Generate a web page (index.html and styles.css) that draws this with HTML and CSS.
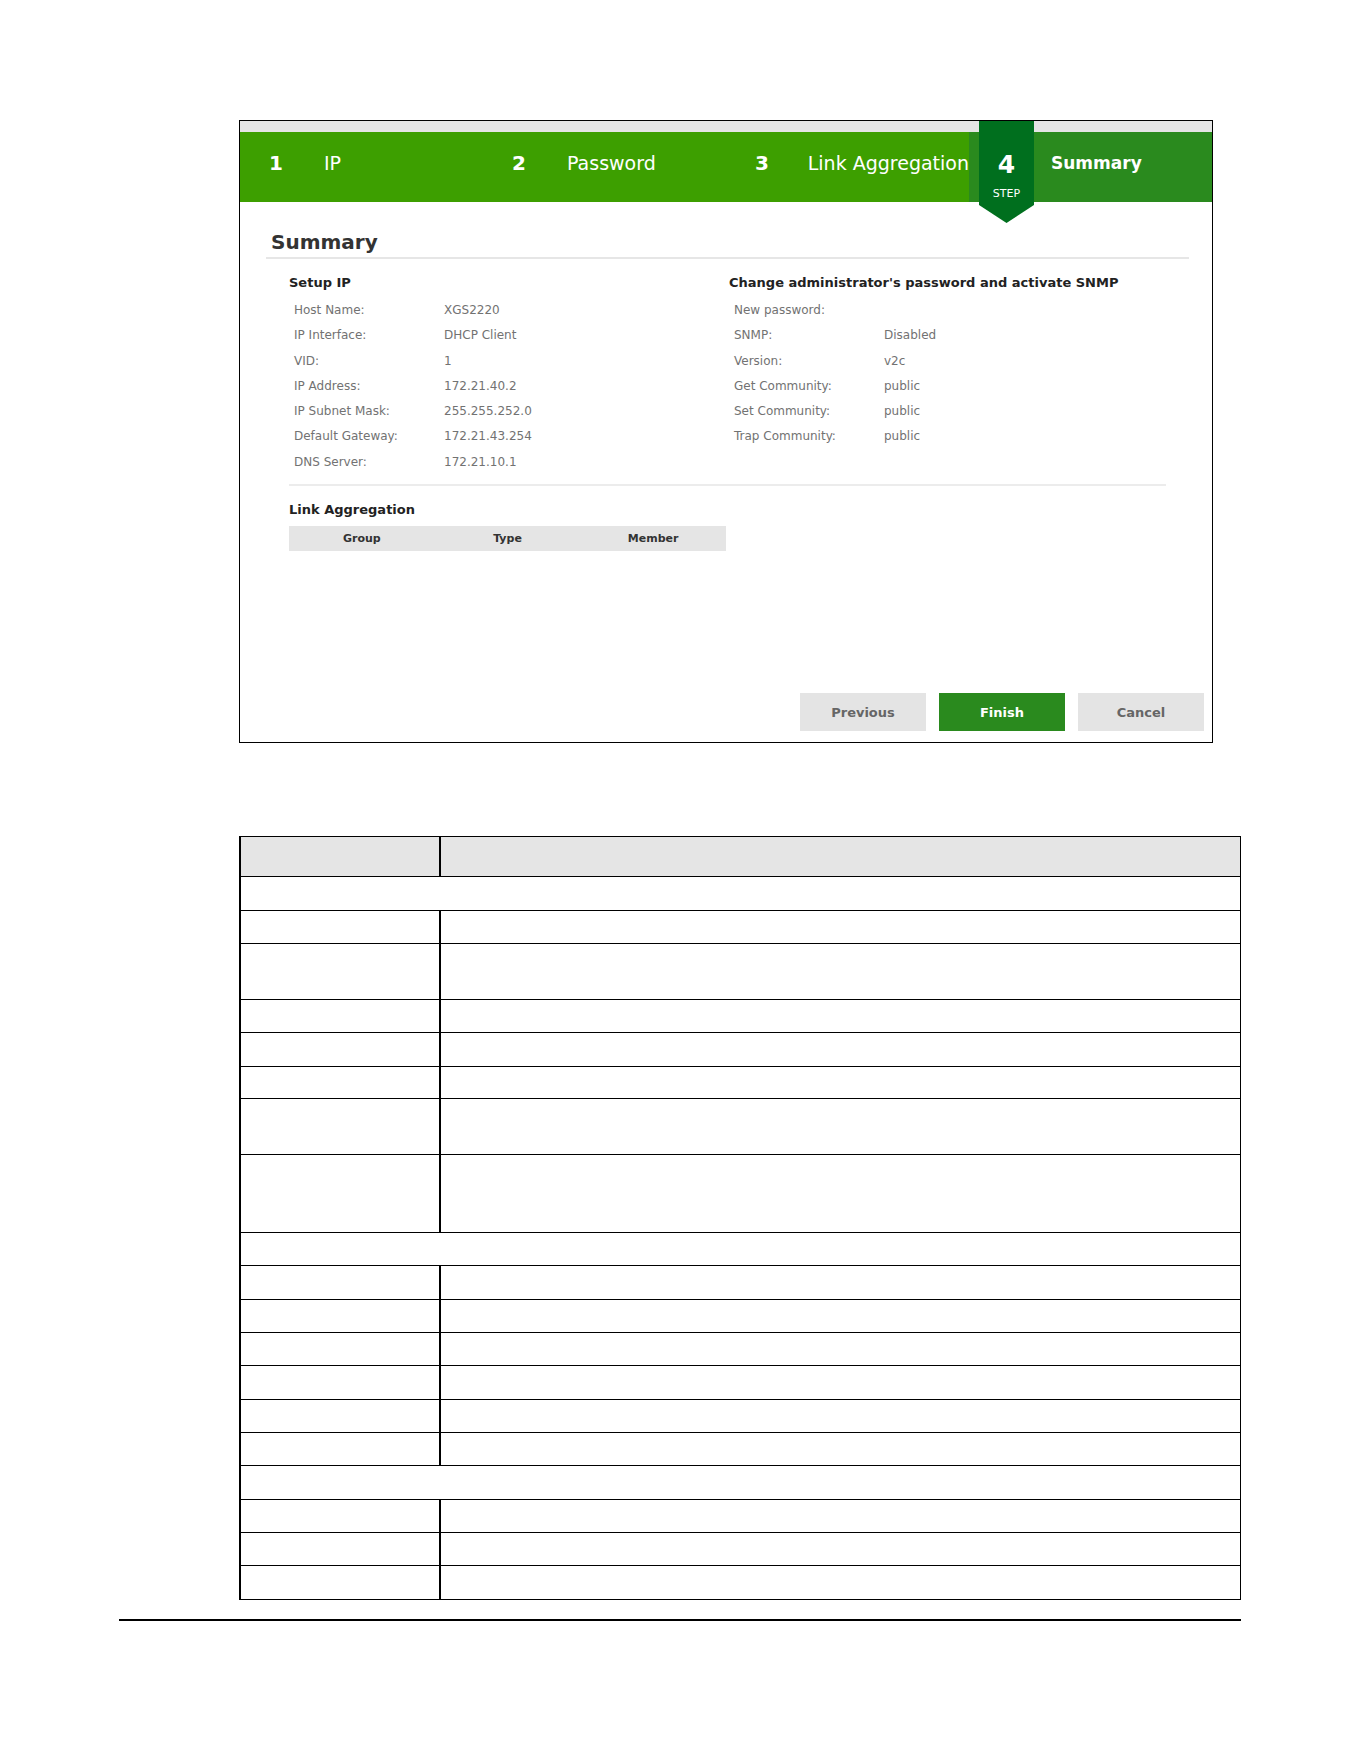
FILE: index.html
```html
<!DOCTYPE html>
<html lang="en">
<head>
    <meta charset="UTF-8">
    <meta name="viewport" content="width=device-width, initial-scale=1.0">
    <title>Summary</title>
    <link rel="stylesheet" href="styles.css">
</head>
<body>
    <div class="wizard">
        <div class="wizardTop"></div>
        <div class="steps">
            <div class="step"><span class="num">1</span><span class="label">IP</span></div>
            <div class="step"><span class="num">2</span><span class="label">Password</span></div>
            <div class="step"><span class="num">3</span><span class="label">Link Aggregation</span></div>
            <div class="step current"><span class="label">Summary</span></div>
        </div>
        <div class="badge">
            <span class="badgeNum">4</span>
            <span class="badgeText">STEP</span>
        </div>

        <div class="content">
            <div class="title">Summary</div>
            <div class="details">
                <div class="columns">
                    <div class="col">
                        <div class="sectionHead">Setup IP</div>
                        <div class="infoRow"><span class="k">Host Name:</span><span>XGS2220</span></div>
                        <div class="infoRow"><span class="k">IP Interface:</span><span>DHCP Client</span></div>
                        <div class="infoRow"><span class="k">VID:</span><span>1</span></div>
                        <div class="infoRow"><span class="k">IP Address:</span><span>172.21.40.2</span></div>
                        <div class="infoRow"><span class="k">IP Subnet Mask:</span><span>255.255.252.0</span></div>
                        <div class="infoRow"><span class="k">Default Gateway:</span><span>172.21.43.254</span></div>
                        <div class="infoRow"><span class="k">DNS Server:</span><span>172.21.10.1</span></div>
                    </div>
                    <div class="col">
                        <div class="sectionHead">Change administrator's password and activate SNMP</div>
                        <div class="infoRow"><span class="k">New password:</span><span></span></div>
                        <div class="infoRow"><span class="k">SNMP:</span><span>Disabled</span></div>
                        <div class="infoRow"><span class="k">Version:</span><span>v2c</span></div>
                        <div class="infoRow"><span class="k">Get Community:</span><span>public</span></div>
                        <div class="infoRow"><span class="k">Set Community:</span><span>public</span></div>
                        <div class="infoRow"><span class="k">Trap Community:</span><span>public</span></div>
                    </div>
                </div>
                <div class="divider"></div>
                <div class="sectionHead linkHead">Link Aggregation</div>
                <div class="lagHeader">
                    <span>Group</span>
                    <span>Type</span>
                    <span>Member</span>
                </div>
            </div>
            <div class="actions">
                <button class="btn">Previous</button>
                <button class="btn finish">Finish</button>
                <button class="btn">Cancel</button>
            </div>
        </div>
    </div>

    <table class="descTable">
        <tr class="head r40"><td class="first"></td><td></td></tr>
        <tr class="r34"><td colspan="2"></td></tr>
        <tr class="r33"><td class="first"></td><td></td></tr>
        <tr class="r56"><td class="first"></td><td></td></tr>
        <tr class="r33"><td class="first"></td><td></td></tr>
        <tr class="r34"><td class="first"></td><td></td></tr>
        <tr class="r32"><td class="first"></td><td></td></tr>
        <tr class="r56"><td class="first"></td><td></td></tr>
        <tr class="r78"><td class="first"></td><td></td></tr>
        <tr class="r33"><td colspan="2"></td></tr>
        <tr class="r34"><td class="first"></td><td></td></tr>
        <tr class="r33"><td class="first"></td><td></td></tr>
        <tr class="r33"><td class="first"></td><td></td></tr>
        <tr class="r34"><td class="first"></td><td></td></tr>
        <tr class="r33"><td class="first"></td><td></td></tr>
        <tr class="r33"><td class="first"></td><td></td></tr>
        <tr class="r34"><td colspan="2"></td></tr>
        <tr class="r33"><td class="first"></td><td></td></tr>
        <tr class="r33"><td class="first"></td><td></td></tr>
        <tr class="r34"><td class="first"></td><td></td></tr>
    </table>

    <div class="pageFooter"></div>
</body>
</html>
```

FILE: styles.css
```css
body
{
    margin: 0;
    background-color: #fff;
    font-family: "DejaVu Sans", "Noto Sans", sans-serif;
}
.wizard
{
    position: relative;
    display: flex;
    flex-direction: column;
    width: 972px;
    height: 621px;
    margin: 120px 0 0 239px;
    border: 1px solid #000;
}
.wizardTop
{
    height: 11px;
    background-color: #e5e5e5;
}
.steps
{
    display: flex;
    height: 70px;
    background-color: #3d9f00;
}
.step
{
    display: flex;
    align-items: center;
    box-sizing: border-box;
    width: 243px;
    padding-left: 29px;
    padding-bottom: 8px;
    color: #fff;
}
.num
{
    width: 55px;
    font-size: 20px;
    font-weight: bold;
}
.label
{
    font-size: 19px;
    white-space: nowrap;
}
.step.current
{
    flex: 1;
    padding-left: 82px;
    background-color: #2a8a1e;
}
.step.current .label
{
    font-size: 17px;
    font-weight: bold;
}
.badge
{
    position: absolute;
    left: 739px;
    top: 0;
    width: 55px;
    height: 102px;
    display: flex;
    flex-direction: column;
    align-items: center;
    padding-top: 30px;
    box-sizing: border-box;
    background-color: #006f1e;
    color: #fff;
    clip-path: polygon(0 0, 100% 0, 100% 84px, 50% 100%, 0 84px);
}
.badgeNum
{
    font-size: 25px;
    font-weight: bold;
    line-height: 28px;
}
.badgeText
{
    margin-top: 8px;
    font-size: 11px;
    line-height: 14px;
}
.content
{
    flex: 1;
    display: flex;
    flex-direction: column;
    padding: 28px 8px 11px 26px;
}
.title
{
    margin-right: 15px;
    padding-left: 5px;
    padding-bottom: 3px;
    font-size: 20px;
    font-weight: bold;
    line-height: 24px;
    color: #333;
    border-bottom: 2px solid #e6e6e6;
}
.details
{
    padding: 0 38px 0 23px;
}
.columns
{
    display: grid;
    grid-template-columns: 440px 1fr;
    margin-top: 15px;
}
.sectionHead
{
    margin-bottom: 6px;
    font-size: 13px;
    font-weight: bold;
    line-height: 18px;
    color: #222;
    white-space: nowrap;
}
.infoRow
{
    display: flex;
    font-size: 12px;
    line-height: 25.3px;
    color: #727272;
}
.infoRow .k
{
    width: 150px;
    padding-left: 5px;
}
.divider
{
    margin-top: 9px;
    border-top: 2px solid #ececec;
}
.linkHead
{
    margin-top: 15px;
    margin-bottom: 7px;
}
.lagHeader
{
    display: grid;
    grid-template-columns: 1fr 1fr 1fr;
    width: 437px;
    height: 25px;
    align-items: center;
    text-align: center;
    background-color: #e5e5e5;
    font-size: 11px;
    font-weight: bold;
    color: #333;
}
.actions
{
    display: flex;
    justify-content: flex-end;
    gap: 13px;
    margin-top: auto;
}
.btn
{
    width: 126px;
    height: 38px;
    border: none;
    background-color: #e4e4e4;
    color: #666;
    font-family: "DejaVu Sans", sans-serif;
    font-size: 13px;
    font-weight: bold;
}
.btn.finish
{
    background-color: #2a8a1e;
    color: #fff;
}
.descTable
{
    width: 1002px;
    margin: 93px 0 0 239px;
    border-collapse: collapse;
    border-left: 2px solid #000;
}
.descTable td
{
    padding: 0;
    border: 1px solid #000;
}
.descTable td.first
{
    width: 198px;
    border-right: 2px solid #000;
}
.descTable .head td
{
    background-color: #e5e5e5;
}
.r32 { height: 32px; }
.r33 { height: 33px; }
.r34 { height: 34px; }
.r40 { height: 40px; }
.r56 { height: 56px; }
.r78 { height: 78px; }
.pageFooter
{
    width: 1122px;
    margin: 19px 0 0 119px;
    border-top: 2px solid #000;
}
```
